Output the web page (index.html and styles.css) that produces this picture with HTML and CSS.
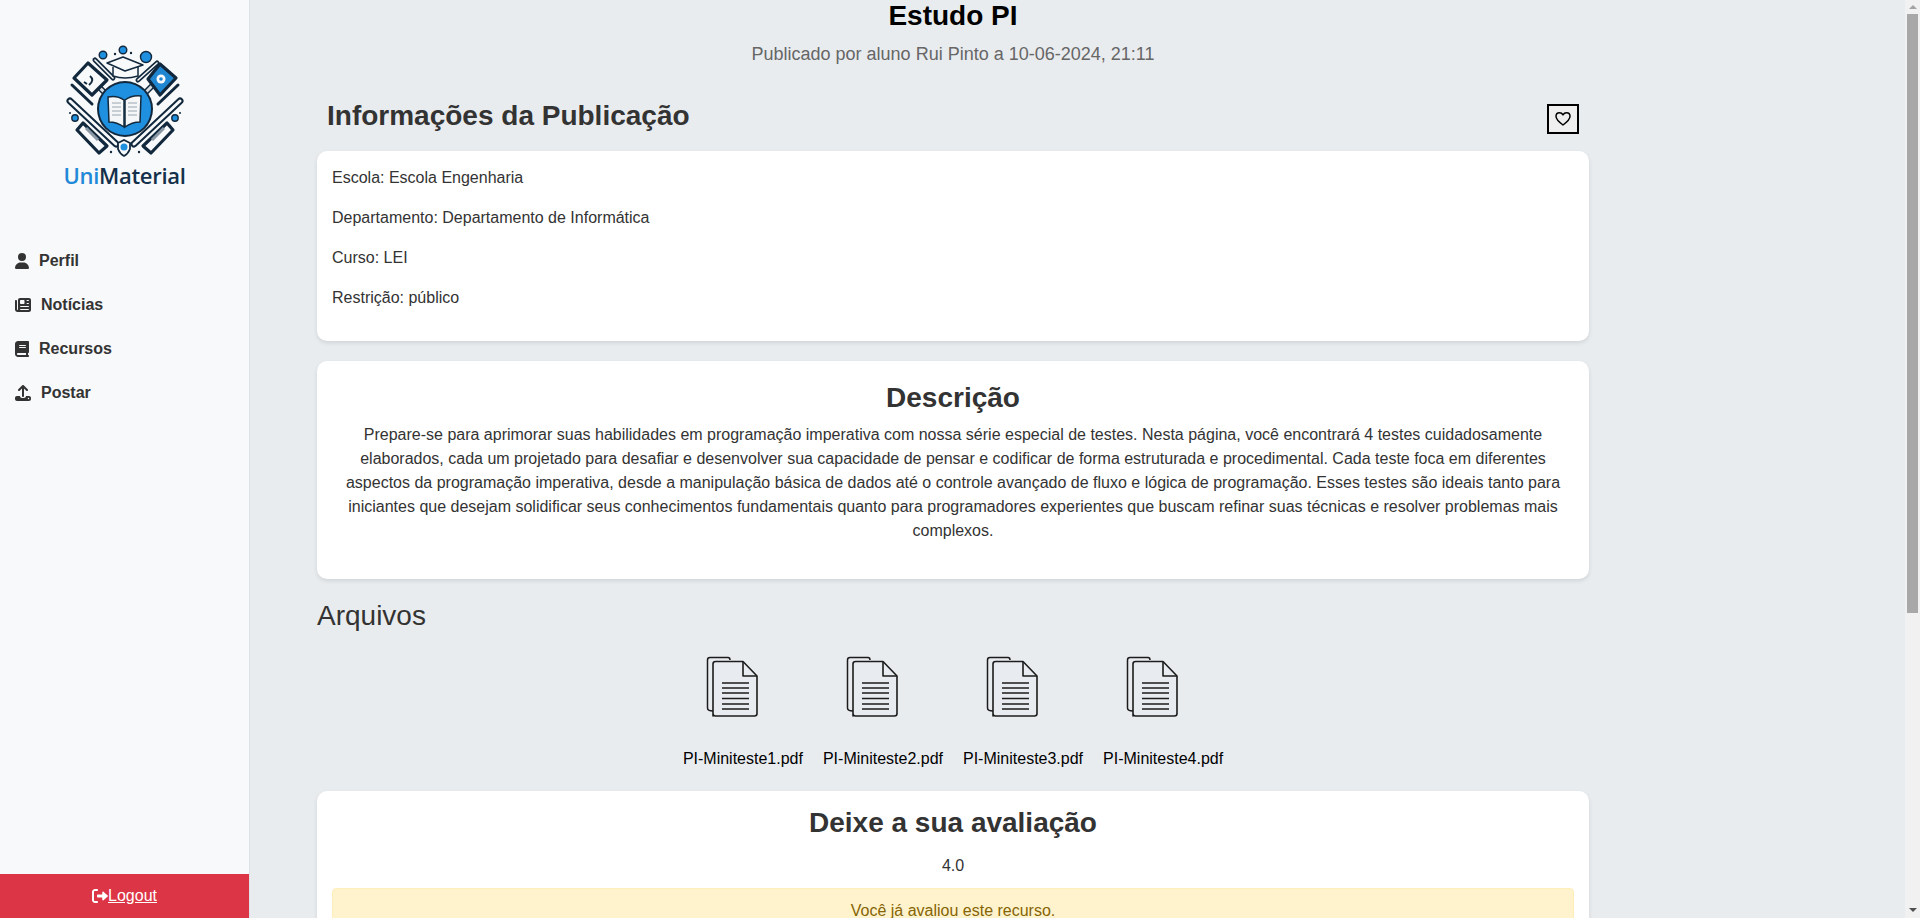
FILE: index.html
```html
<!DOCTYPE html>
<html lang="pt">
<head>
    <meta charset="UTF-8">
    <meta name="viewport" content="width=device-width, initial-scale=1.0">
    <title>Estudo PI</title>
    <link rel="stylesheet" href="styles.css">
</head>
<body>
<div class="app">
    <aside class="sidebar">
        <div class="logo">
            <svg class="logo-mark" viewBox="60 42 130 120" width="130" height="120">
                <!-- pencils at the top -->
                <g fill="none" stroke="#12283d" stroke-linecap="round">
                    <path d="M95 60 L113 78" stroke-width="5"/>
                    <path d="M95 60 L113 78" stroke="#f7f9fb" stroke-width="1.600"/>
                    <path d="M157 63 L138 80" stroke-width="5"/>
                    <path d="M157 63 L138 80" stroke="#f7f9fb" stroke-width="1.600"/>
                    <!-- pens at the sides -->
                    <path d="M72 85 L92 104" stroke-width="3"/>
                    <path d="M178 85 L158 104" stroke-width="3"/>
                    <path d="M70 101 L116 144" stroke-width="7"/>
                    <path d="M70 101 L116 144" stroke="#f7f9fb" stroke-width="3"/>
                    <path d="M180 101 L134 144" stroke-width="7"/>
                    <path d="M180 101 L134 144" stroke="#f7f9fb" stroke-width="3"/>
                    <path d="M96 84 L104 92" stroke-width="6"/>
                    <path d="M96 84 L104 92" stroke="#d9dee2" stroke-width="3"/>
                    <path d="M152 86 L144 94" stroke-width="6"/>
                    <path d="M152 86 L144 94" stroke="#d9dee2" stroke-width="3"/>
                </g>
                <!-- tablet, blue book and rulers -->
                <g stroke="#12283d" stroke-width="3.200" stroke-linejoin="round">
                    <path d="M88 63 L107 80 L92 95 L74 78 Z" fill="#f7f9fb"/>
                    <path d="M160 64 L176 78 L160 95 L148 79 Z" fill="#1f86d2"/>
                    <path d="M83 123 L107 146 L99 153 L77 130 Z" fill="#f7f9fb"/>
                    <path d="M167 123 L143 146 L151 153 L173 130 Z" fill="#f7f9fb"/>
                </g>
                <path d="M90 76 Q95 80 89 85 M84 82 L87 84" fill="none" stroke="#12283d" stroke-width="2"/>
                <circle cx="161" cy="79" r="4.500" fill="#f7f9fb"/>
                <circle cx="161" cy="79" r="1.800" fill="#1f86d2"/>
                <path d="M86 128 L98 140 M164 128 L152 140" stroke="#8a98a5" stroke-width="3"/>
                <!-- disc with the open book -->
                <circle cx="125" cy="109" r="28" fill="#12283d"/>
                <circle cx="125" cy="109" r="26" fill="#1f8fe0"/>
                <path d="M108 97 Q117 95 124 100 V127 Q117 122 109 122 Z" fill="#f4f6f7" stroke="#12283d" stroke-width="1.500"/>
                <path d="M141 96 Q132 95 125 100 V127 Q132 122 140 122 Z" fill="#f4f6f7" stroke="#12283d" stroke-width="1.500"/>
                <path d="M112 103 H121 M112 107 H121 M112 111 H121 M112 115 H121 M128 103 H137 M128 107 H137 M128 111 H137 M128 115 H137" stroke="#9aa6b0" stroke-width="1"/>
                <!-- graduation cap -->
                <path d="M113 67 V76 Q125 80 138 76 V67" fill="#f7f9fb" stroke="#12283d" stroke-width="1.500"/>
                <path d="M107 63 L123 57 L143 65 L125 71 Z" fill="#f7f9fb" stroke="#12283d" stroke-width="1.500" stroke-linejoin="round"/>
                <!-- small circles and dots -->
                <g fill="#1f8fe0" stroke="#12283d" stroke-width="1.400">
                    <circle cx="103" cy="55" r="3.800"/>
                    <circle cx="123" cy="50" r="3.800"/>
                    <circle cx="146" cy="57" r="5.500"/>
                    <circle cx="75" cy="118" r="3.200"/>
                    <circle cx="175" cy="118" r="3.200"/>
                </g>
                <g fill="#12283d">
                    <circle cx="115" cy="54" r="1.200"/>
                    <circle cx="131" cy="53" r="1.200"/>
                    <circle cx="70" cy="113" r="1"/>
                    <circle cx="180" cy="113" r="1"/>
                    <circle cx="111" cy="152" r="1.200"/>
                    <circle cx="139" cy="152" r="1.200"/>
                </g>
                <!-- shield -->
                <path d="M118 143 L124 140 L130 143 V149 Q128 154 124 156 Q120 154 118 149 Z" fill="#f7f9fb" stroke="#12283d" stroke-width="1.800"/>
                <circle cx="124" cy="147" r="3.500" fill="#1f8fe0"/>
            </svg>
            <div class="logo-text"><span class="logo-uni">Uni</span>Material</div>
        </div>
        <nav class="nav">
            <a class="nav-link" href="#">
                <svg class="nav-icon icon-sm" viewBox="0 0 448 512"><path d="M224 256a128 128 0 1 0 0-256 128 128 0 1 0 0 256zm-45.700 48C79.800 304 0 383.800 0 482.300 0 498.700 13.300 512 29.700 512h388.600c16.400 0 29.700-13.300 29.700-29.700C448 383.800 368.200 304 269.700 304h-91.400z"/></svg>
                Perfil
            </a>
            <a class="nav-link" href="#">
                <svg class="nav-icon icon-lg" viewBox="0 0 512 512"><path d="M96 96c0-35 29-64 64-64h288c35 0 64 29 64 64v320c0 35-29 64-64 64H80c-44 0-80-36-80-80V128c0-18 14-32 32-32s32 14 32 32v272c0 9 7 16 16 16s16-7 16-16V96zm64 24v80c0 13 11 24 24 24h96c13 0 24-11 24-24v-80c0-13-11-24-24-24h-96c-13 0-24 11-24 24zm208-8c0 9 7 16 16 16h48c9 0 16-7 16-16s-7-16-16-16h-48c-9 0-16 7-16 16zm0 96c0 9 7 16 16 16h48c9 0 16-7 16-16s-7-16-16-16h-48c-9 0-16 7-16 16zm-208 96c0 9 7 16 16 16h256c9 0 16-7 16-16s-7-16-16-16H176c-9 0-16 7-16 16zm0 96c0 9 7 16 16 16h256c9 0 16-7 16-16s-7-16-16-16H176c-9 0-16 7-16 16z"/></svg>
                Notícias
            </a>
            <a class="nav-link" href="#">
                <svg class="nav-icon icon-sm" viewBox="0 0 448 512"><path d="M96 0C43 0 0 43 0 96v320c0 53 43 96 96 96h320c18 0 32-14 32-32s-14-32-32-32v-64c18 0 32-14 32-32V32c0-18-14-32-32-32H96zm0 384h256v64H96c-18 0-32-14-32-32s14-32 32-32zm32-240c0-9 7-16 16-16h192c9 0 16 7 16 16s-7 16-16 16H144c-9 0-16-7-16-16zm16 48h192c9 0 16 7 16 16s-7 16-16 16H144c-9 0-16-7-16-16s7-16 16-16z"/></svg>
                Recursos
            </a>
            <a class="nav-link" href="#">
                <svg class="nav-icon icon-lg" viewBox="0 0 512 512"><path d="M288 109v243c0 18-14 32-32 32s-32-14-32-32V109l-73 73c-13 13-33 13-46 0s-13-33 0-46L233 9c13-13 33-13 46 0l128 127c13 13 13 33 0 46s-33 13-46 0l-73-73zM64 352h96c0 35 29 64 64 64h64c35 0 64-29 64-64h96c35 0 64 29 64 64v32c0 35-29 64-64 64H64c-35 0-64-29-64-64v-32c0-35 29-64 64-64zm368 104a24 24 0 1 0 0-48 24 24 0 1 0 0 48z"/></svg>
                Postar
            </a>
        </nav>
        <a class="logout" href="#">
            <svg class="logout-icon" viewBox="0 0 512 512"><path d="M502 273c13-9 13-25 0-34L367 121c-15-13-39-2-39 17v70H192c-18 0-32 14-32 32v32c0 18 14 32 32 32h136v70c0 20 24 30 39 17l135-118zM160 96c18 0 32-14 32-32s-14-32-32-32H96C43 32 0 75 0 128v256c0 53 43 96 96 96h64c18 0 32-14 32-32s-14-32-32-32H96c-18 0-32-14-32-32V128c0-18 14-32 32-32h64z"/></svg><span class="logout-text">Logout</span>
        </a>
    </aside>

    <main class="main">
        <div class="container">
            <header class="page-head">
                <h1 class="page-title">Estudo PI</h1>
                <p class="page-sub">Publicado por aluno Rui Pinto a 10-06-2024, 21:11</p>
            </header>

            <div class="info-head">
                <h2 class="info-title">Informações da Publicação</h2>
                <button class="fav-btn" type="button">
                    <svg viewBox="0 0 16 16" width="16" height="16"><path fill="none" stroke="#000" stroke-width="1.500" stroke-linejoin="round" d="M8 14C2.500 10 1 7.500 1 5.300 1 3.200 2.600 1.800 4.500 1.800 6 1.800 7.300 2.600 8 3.900 8.700 2.600 10 1.800 11.500 1.800 13.400 1.800 15 3.200 15 5.300 15 7.500 13.500 10 8 14Z"/></svg>
                </button>
            </div>

            <section class="card">
                <p>Escola: Escola Engenharia</p>
                <p>Departamento: Departamento de Informática</p>
                <p>Curso: LEI</p>
                <p>Restrição: público</p>
            </section>

            <section class="card card-center desc">
                <h2 class="card-title">Descrição</h2>
                <p>Prepare-se para aprimorar suas habilidades em programação imperativa com nossa série especial de testes. Nesta página, você encontrará 4 testes cuidadosamente elaborados, cada um projetado para desafiar e desenvolver sua capacidade de pensar e codificar de forma estruturada e procedimental. Cada teste foca em diferentes aspectos da programação imperativa, desde a manipulação básica de dados até o controle avançado de fluxo e lógica de programação. Esses testes são ideais tanto para iniciantes que desejam solidificar seus conhecimentos fundamentais quanto para programadores experientes que buscam refinar suas técnicas e resolver problemas mais complexos.</p>
            </section>

            <h3 class="files-title">Arquivos</h3>
            <div class="files">
                <a class="file" href="#">
                    <svg class="file-icon" viewBox="0 0 80 64"><use href="#doc"/></svg>
                    PI-Miniteste1.pdf
                </a>
                <a class="file" href="#">
                    <svg class="file-icon" viewBox="0 0 80 64"><use href="#doc"/></svg>
                    PI-Miniteste2.pdf
                </a>
                <a class="file" href="#">
                    <svg class="file-icon" viewBox="0 0 80 64"><use href="#doc"/></svg>
                    PI-Miniteste3.pdf
                </a>
                <a class="file" href="#">
                    <svg class="file-icon" viewBox="0 0 80 64"><use href="#doc"/></svg>
                    PI-Miniteste4.pdf
                </a>
            </div>

            <section class="card card-center rating">
                <h2 class="card-title">Deixe a sua avaliação</h2>
                <p class="rating-value">4.0</p>
                <div class="alert">Você já avaliou este recurso.</div>
            </section>
        </div>
    </main>

    <div class="scrollbar">
        <svg class="scroll-arrow" viewBox="0 0 8 4" width="8" height="4"><path d="M4 0 L8 4 H0 Z" fill="#a3a3a3"/></svg>
        <div class="scroll-thumb"></div>
        <svg class="scroll-arrow scroll-down" viewBox="0 0 8 4" width="8" height="4"><path d="M0 0 H8 L4 4 Z" fill="#505050"/></svg>
    </div>
</div>

<svg class="defs" width="0" height="0">
    <defs>
        <g id="doc" fill="none" stroke="#1c1c1c" stroke-linejoin="round">
            <path stroke-width="1.500" d="M10 55 Q4.500 55 4.500 52 V4 Q4.500 1.500 7 1.500 H25 Q27 1.500 27 4"/>
            <path stroke-width="1.600" d="M10 60 V8 Q10 5.500 12.500 5.500 H40 L54 20 V57.500 Q54 60 51.500 60 H12.500 Q10 60 10 57.500 Z" fill="#e8ebef"/>
            <path stroke-width="1.600" d="M40 6 V20 H54"/>
            <path stroke-width="1.500" d="M19 27 H46 M19 32 H46 M19 37 H46 M19 42.500 H46 M19 48 H46 M19 53 H46"/>
        </g>
    </defs>
</svg>
</body>
</html>
```
FILE: styles.css
```css
* {
    box-sizing: border-box;
}
html, body {
    height: 100%;
    margin: 0;
}
body {
    font-family: "Liberation Sans", Arial, sans-serif;
    font-size: 16px;
    line-height: 1.5;
    color: #333;
    background-color: #e9ecef;
    overflow: hidden;
}
.app {
    display: flex;
    height: 100vh;
}
.defs {
    position: absolute;
}

/* sidebar */
.sidebar {
    width: 250px;
    flex-shrink: 0;
    display: flex;
    flex-direction: column;
    background: #f8f9fa;
    border-right: 1px solid #dee2e6;
}
.logo {
    height: 241px;
    display: flex;
    flex-direction: column;
    align-items: center;
    padding-top: 42px;
}
.logo-mark {
    display: block;
}
.logo-text {
    margin-top: -1px;
    font-family: "Open Sans", sans-serif;
    font-weight: 600;
    font-size: 22px;
    line-height: 28px;
    letter-spacing: -0.3px;
    color: #14304a;
}
.logo-uni {
    color: #2288d8;
}
.nav {
    flex: 1;
    display: flex;
    flex-direction: column;
    gap: 4px;
    padding: 0 15px;
}
.nav-link {
    display: flex;
    align-items: center;
    height: 40px;
    font-weight: 700;
    color: #333;
    text-decoration: none;
}
.nav-icon {
    height: 16px;
    fill: #333;
    margin-right: 10px;
}
.icon-sm {
    width: 14px;
}
.icon-lg {
    width: 16px;
}
.logout {
    height: 44px;
    display: flex;
    align-items: center;
    justify-content: center;
    background: #dc3545;
    color: #fff;
}
.logout-icon {
    width: 16px;
    height: 16px;
    fill: #fff;
}
.logout-text {
    text-decoration: underline;
}

/* main column */
.main {
    flex: 1;
    overflow: hidden;
}
.container {
    width: 1272px;
    margin-left: 67px;
}
.page-head {
    text-align: center;
}
.page-title {
    margin: 0;
    font-size: 28px;
    line-height: 32px;
    color: #000;
}
.page-sub {
    margin: 9px 0 0;
    font-size: 18px;
    line-height: 27px;
    color: #666;
}
.info-head {
    display: flex;
    justify-content: space-between;
    margin-top: 28px;
    margin-bottom: 15px;
    padding: 0 10px;
}
.info-title {
    margin: 0;
    font-size: 28px;
    line-height: 40px;
    color: #333;
}
.fav-btn {
    width: 32px;
    height: 30px;
    margin-top: 8px;
    padding: 0;
    background: #efefef;
    border: 2px solid #000;
    display: flex;
    align-items: center;
    justify-content: center;
}
.card {
    background: #fff;
    border-radius: 10px;
    box-shadow: 0 2px 4px rgba(0, 0, 0, 0.1);
    padding: 15px;
    margin-bottom: 20px;
}
.card p {
    margin: 0 0 16px;
}
.card-center {
    text-align: center;
}
.card-title {
    margin: 0;
    font-size: 28px;
    line-height: 34px;
    color: #333;
}
.desc .card-title {
    margin: 5px 0 8px;
}
.desc p {
    margin-bottom: 21px;
}
.files-title {
    margin: 0;
    font-size: 28px;
    font-weight: 400;
    line-height: 34px;
}
.files {
    display: flex;
    justify-content: center;
    gap: 20px;
    margin-top: 23px;
    margin-bottom: 20px;
}
.file {
    display: flex;
    flex-direction: column;
    align-items: center;
    color: #000;
    text-decoration: none;
}
.file-icon {
    width: 80px;
    height: 64px;
    margin-bottom: 27px;
}
.card .rating-value {
    margin: 14px 0 10px;
}
.alert {
    background: #fff3cd;
    border: 1px solid #ffeeba;
    border-radius: 4px;
    color: #856404;
    padding: 10px 20px 12px;
}

/* page scrollbar */
.scrollbar {
    width: 15px;
    flex-shrink: 0;
    display: flex;
    flex-direction: column;
    align-items: center;
    background: #f1f1f1;
}
.scroll-arrow {
    display: block;
    margin-top: 5px;
    flex-shrink: 0;
}
.scroll-thumb {
    width: 11px;
    height: 599px;
    margin-top: 5px;
    background: #a8a8a8;
}
.scroll-down {
    margin-top: auto;
    margin-bottom: 6px;
}
```
